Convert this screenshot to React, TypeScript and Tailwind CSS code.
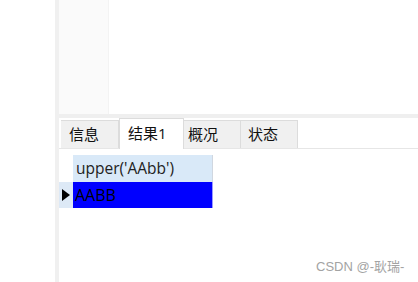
import React from "react";

const ui = { fontFamily: '"Open Sans", "Noto Sans CJK SC", "Noto Sans", sans-serif' };
const wm = { fontFamily: '"Liberation Sans", "Noto Sans CJK SC", sans-serif' };

function Tab({ label, active, w, pl }: { label: string; active?: boolean; w: string; pl: string }) {
  return (
    <div
      className={
        active
          ? `${w} ${pl} h-[31px] bg-white border-t border-x border-[#dcdcdc] flex items-center pb-[2px] text-[15px] text-[#111] -mb-px relative z-10`
          : `${w} ${pl} h-[28px] bg-[#f0f0f0] border-t border-r border-[#dcdcdc] flex items-center text-[15px] text-[#111]`
      }
    >
      {label}
    </div>
  );
}

export default function App() {
  return (
    <div className="w-[418px] h-[282px] bg-white flex overflow-hidden relative" style={ui}>
      <div className="w-[55px] shrink-0 bg-white" />
      <div className="w-[4px] shrink-0 bg-[#f0f0f0]" />
      <div className="flex-1 flex flex-col">
        <div className="h-[114px] flex">
          <div className="w-[50px] bg-[#fafafa] border-r border-[#f3f3f3]" />
          <div className="flex-1 bg-white" />
        </div>
        <div className="h-[4px] bg-[#efefef]" />
        <div className="h-[31px] flex items-end pl-[2px] border-b border-[#e6e6e6]">
          <Tab label="信息" w="w-[58px]" pl="pl-[8px]" />
          <Tab label="结果1" active w="w-[65px]" pl="pl-[8px]" />
          <Tab label="概况" w="w-[57px]" pl="pl-[4px]" />
          <Tab label="状态" w="w-[57px]" pl="pl-[7px]" />
        </div>
        <div className="flex-1 pt-[6px]">
          <div className="flex h-[27px]">
            <div className="w-[14px]" />
            <div className="w-[140px] bg-[#d9e9f8] border-r border-[#d0d7e0] flex items-center pl-[3px] text-[15.5px] text-[#222]">
              upper('AAbb')
            </div>
          </div>
          <div className="flex h-[26px]">
            <div className="w-[14px] bg-[#dde9f6] flex items-center justify-center">
              <svg width="8" height="12" viewBox="0 0 8 12">
                <polygon points="0,0 8,6 0,12" fill="#000" />
              </svg>
            </div>
            <div className="w-[140px] bg-[#0000ff] border-r border-[#9a9aff] flex items-center pl-[2px] text-[16px] text-black">
              AABB
            </div>
          </div>
        </div>
      </div>
      <div className="absolute left-[316px] top-[257px] text-[13px] text-[#a3a3a3]" style={wm}>
        CSDN @-耿瑞-
      </div>
    </div>
  );
}
